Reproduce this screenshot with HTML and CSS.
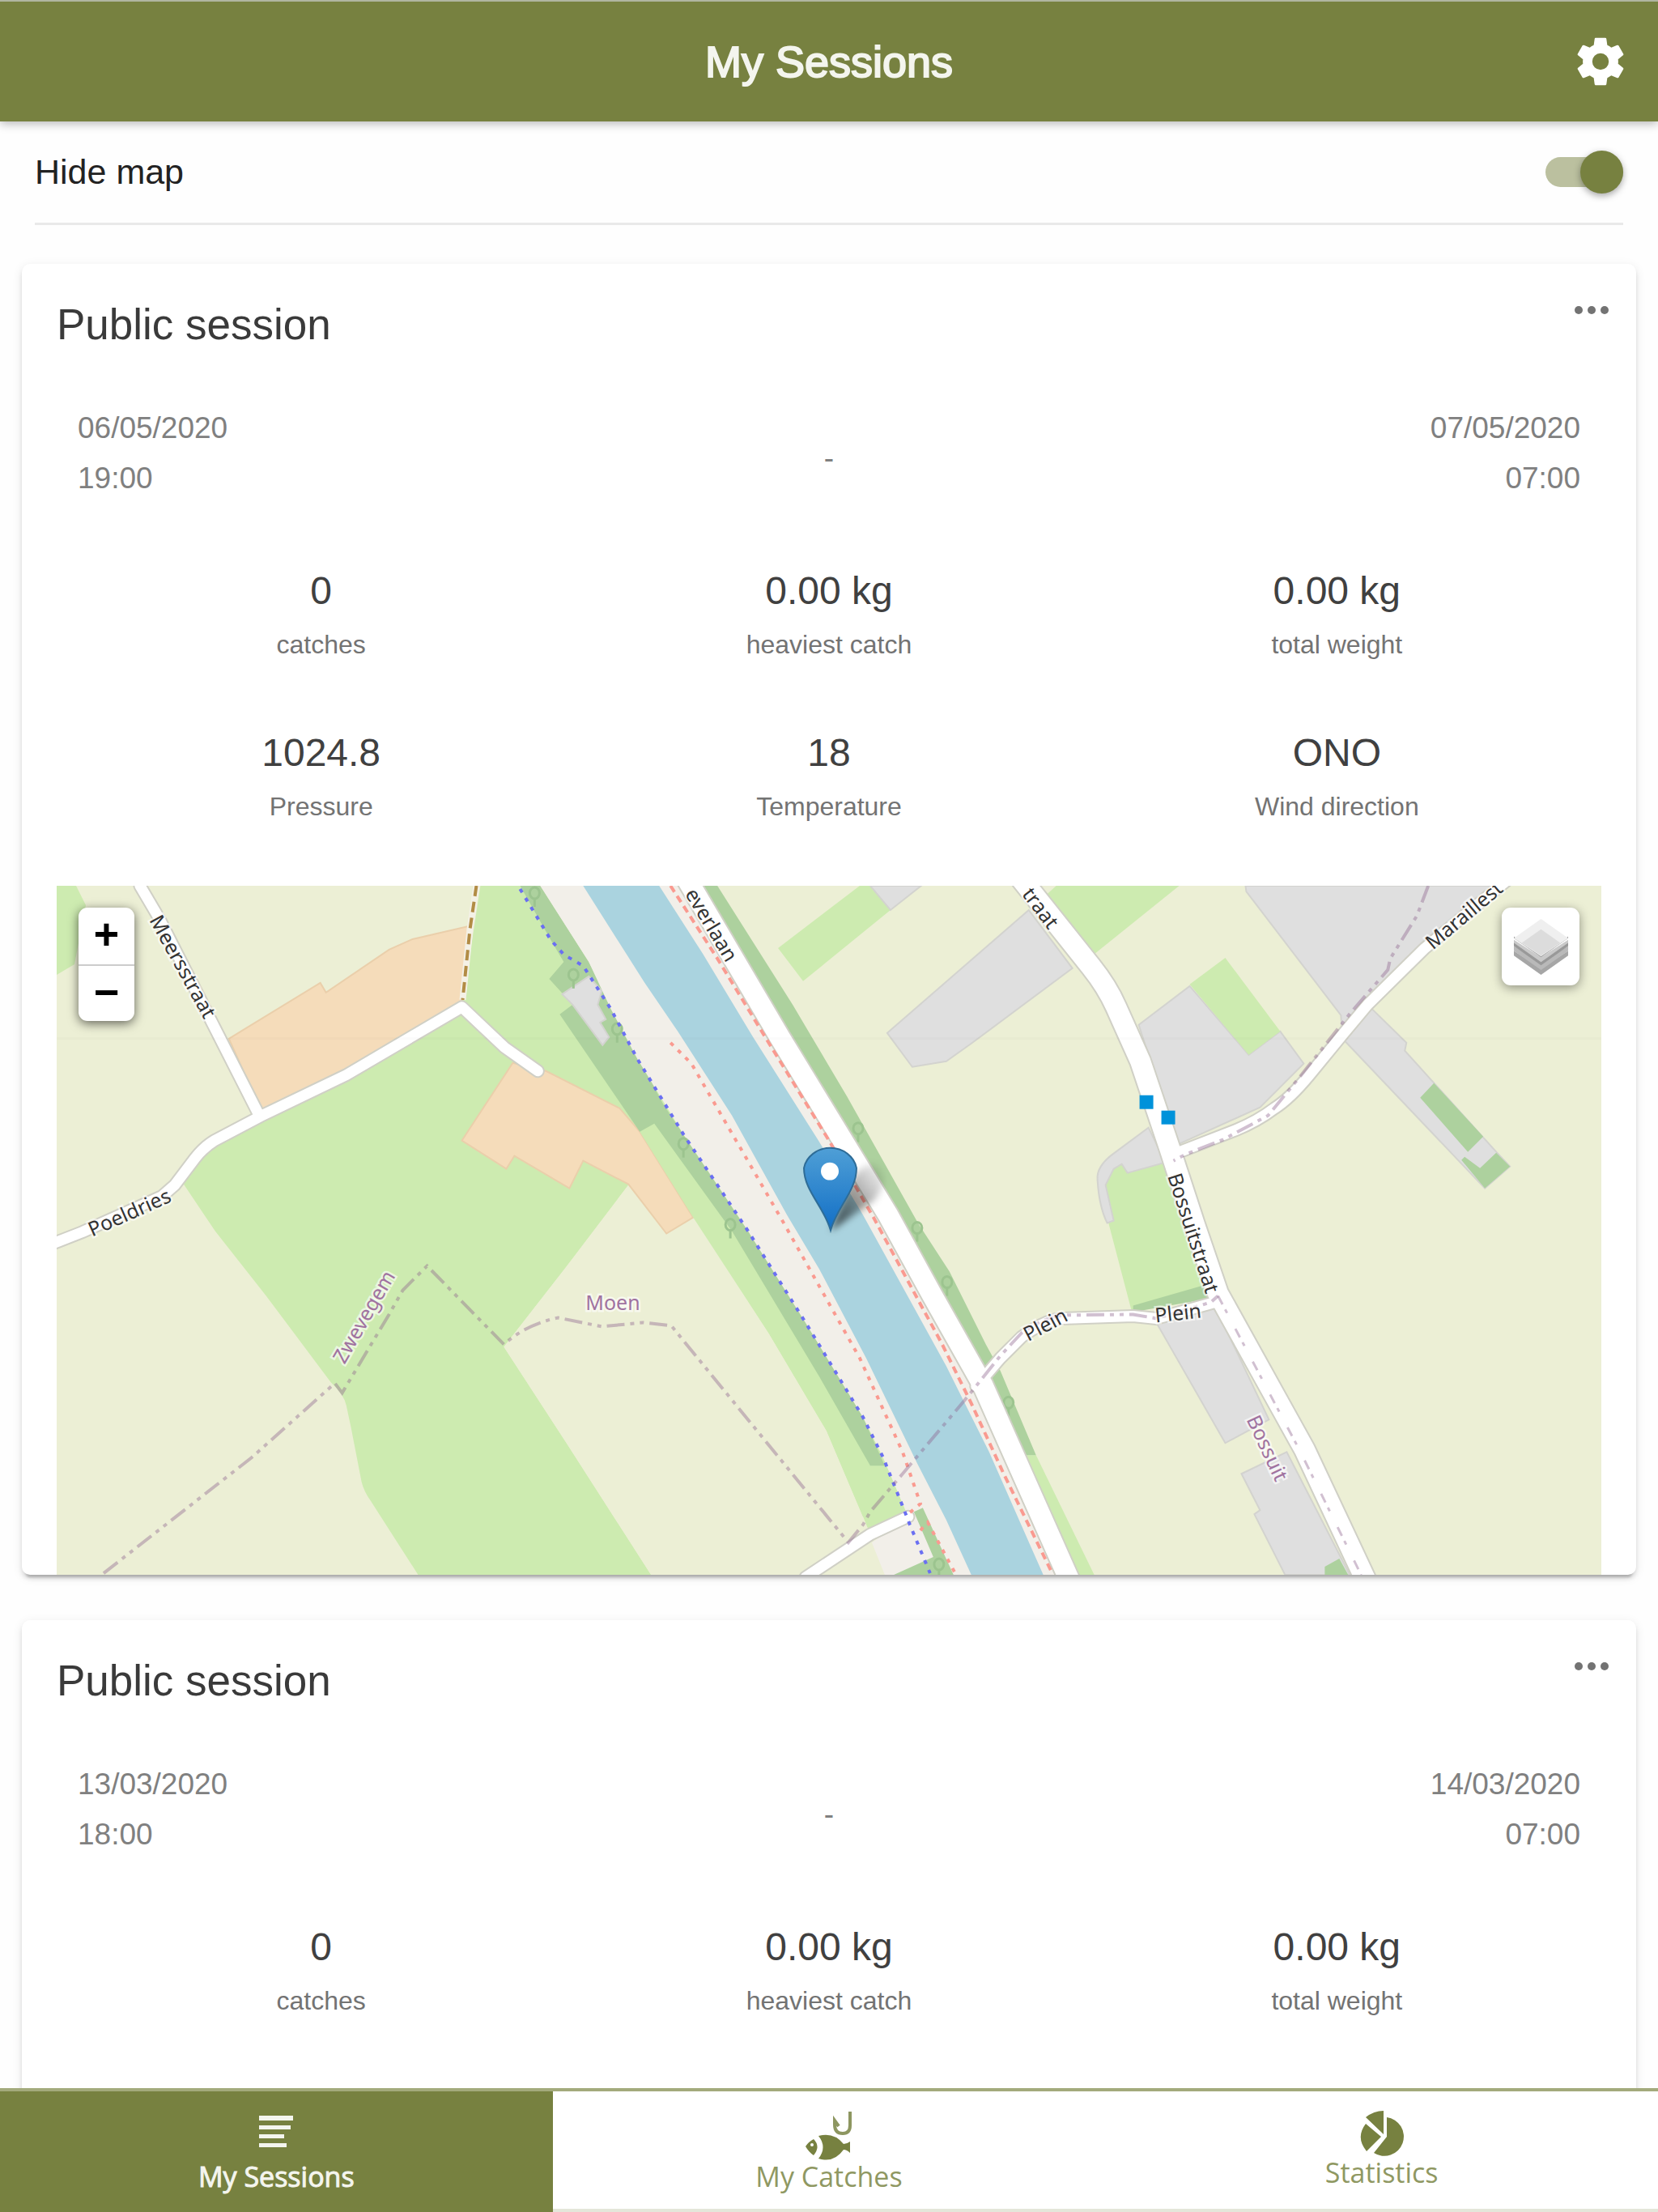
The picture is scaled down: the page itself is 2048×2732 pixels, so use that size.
FILE: index.html
```html
<!DOCTYPE html>
<html lang="en">
<head>
    <meta charset="UTF-8">
    <meta name="viewport" content="width=device-width, initial-scale=1">
    <title>My Sessions</title>
    <link rel="stylesheet" href="styles.css">
</head>
<body>
    <header class="toolbar">
        <h1>My Sessions</h1>
        <button class="settings" type="button" aria-label="Settings">
            <svg viewBox="0 0 24 24"><path d="M19.43 12.98c.04-.32.07-.64.07-.98s-.03-.66-.07-.98l2.11-1.65c.19-.15.24-.42.12-.64l-2-3.46c-.12-.22-.39-.3-.61-.22l-2.49 1c-.52-.4-1.08-.73-1.69-.98l-.38-2.65A.49.49 0 0 0 14 2h-4c-.25 0-.46.18-.49.42l-.38 2.65c-.61.25-1.17.59-1.69.98l-2.49-1c-.23-.09-.49 0-.61.22l-2 3.46c-.13.22-.07.49.12.64l2.11 1.65c-.04.32-.07.65-.07.98s.03.66.07.98l-2.11 1.65c-.19.15-.24.42-.12.64l2 3.46c.12.22.39.3.61.22l2.49-1c.52.4 1.08.73 1.69.98l.38 2.65c.03.24.24.42.49.42h4c.25 0 .46-.18.49-.42l.38-2.65c.61-.25 1.17-.59 1.69-.98l2.49 1c.23.09.49 0 .61-.22l2-3.46c.12-.22.07-.49-.12-.64zM12 15.5a3.5 3.5 0 1 1 0-7 3.5 3.5 0 0 1 0 7z"/></svg>
        </button>
    </header>

    <main class="content">
        <div class="option">
            <label for="hide-map">Hide map</label>
            <input id="hide-map" class="toggle" type="checkbox" checked>
        </div>

        <article class="card">
            <div class="card-head">
                <h2>Public session</h2>
                <button class="more" type="button" aria-label="More">
                    <svg viewBox="0 0 44 12"><circle cx="6" cy="6" r="5"/><circle cx="22" cy="6" r="5"/><circle cx="38" cy="6" r="5"/></svg>
                </button>
            </div>
            <div class="period">
                <div>06/05/2020<br>19:00</div>
                <div class="dash">-</div>
                <div class="end">07/05/2020<br>07:00</div>
            </div>
            <div class="stats">
                <div><div class="value">0</div><div class="name">catches</div></div>
                <div><div class="value">0.00 kg</div><div class="name">heaviest catch</div></div>
                <div><div class="value">0.00 kg</div><div class="name">total weight</div></div>
                <div><div class="value">1024.8</div><div class="name">Pressure</div></div>
                <div><div class="value">18</div><div class="name">Temperature</div></div>
                <div><div class="value">ONO</div><div class="name">Wind direction</div></div>
            </div>
            <div class="map">
                <svg class="tiles" viewBox="69 1093 1910 852">
                    <defs>
                        <linearGradient id="pin" x1="0" y1="0" x2="0" y2="1">
                            <stop offset="0" stop-color="#4f9fd6"/>
                            <stop offset="1" stop-color="#126fc6"/>
                        </linearGradient>
                        <linearGradient id="pin-shade" x1="0" y1="1" x2="1" y2="0">
                            <stop offset="0" stop-opacity=".7"/>
                            <stop offset="1" stop-opacity="0"/>
                        </linearGradient>
                        <filter id="soft" x="-50%" y="-50%" width="200%" height="200%"><feGaussianBlur stdDeviation="4"/></filter>
                        <g id="tree"><ellipse cx="0" cy="0" rx="6" ry="7"/><path d="M0 7V17"/></g>
                    </defs>
                    <rect class="farm" x="60" y="1080" width="1930" height="880"/>

                    <!-- meadows -->
                    <g class="meadow">
                        <path d="M69 1093H93L105 1117L91 1190L69 1203Z"/>
                        <path d="M226 1462L265 1520L328 1600L408 1707Q424 1722 427 1735L433 1763L446 1830Q449 1842 457 1853L516 1945H804L700 1783L622 1663L700 1563L776 1463L860 1505L950 1647L1021 1767L1066 1873L1075 1895L1122 1873L1091 1800L1066 1750L924 1520L754 1245L642 1093H593L570 1243L427 1327L264 1408Z"/>
                        <path d="M1062 1093H1078L1100 1123L992 1211L961 1170Z"/>
                        <path d="M1305 1093H1457L1350 1179L1294 1103Z"/>
                        <path d="M1366 1463L1376 1443L1386 1437L1393 1448L1440 1435L1496 1603L1398 1618L1367 1500Z"/>
                        <path d="M1250 1797H1280L1352 1945H1310Z"/>
                    </g>
                    <path class="farm" d="M776 1463L823 1523L856 1503L950 1647L1021 1767L1066 1873L1075 1895L999 1945H804L700 1783L622 1663L700 1563Z"/>

                    <!-- farmyards -->
                    <path class="yard" d="M282 1282L395 1213L402 1225L480 1172L509 1159L578 1143L570 1240L427 1327L323 1374Z"/>
                    <path class="yard" d="M633 1312L570 1408L625 1443L635 1427L703 1467L720 1433L776 1462L823 1523L856 1503L790 1397L765 1368L674 1322Z"/>
                    <path class="meadow" d="M790 1397L808 1387L904 1520L1012 1700L1075 1810L1066 1873L1021 1767L950 1647L856 1503Z"/>

                    <!-- woods on the left bank -->
                    <path class="wood" d="M642 1093H667L727 1187L745 1223L819 1363L924 1520L995 1633L1066 1750L1093 1810H1075L1012 1700L904 1520L808 1387L790 1397L691 1252L707 1240L678 1208L696 1187L680 1160Z"/>
                    <path class="built" d="M694 1227L727 1205L743 1223L738 1240L748 1258L741 1262L752 1280L744 1290L707 1240Z"/>

                    <!-- canal -->
                    <path class="bank" d="M667 1093H853L963 1280L1097 1500L1152 1600L1214 1710L1318 1945H1093L1077 1905L1122 1873L1091 1800L1066 1750L995 1633L924 1520L886 1463L845 1402L787 1307L754 1245L727 1187Z"/>
                    <path class="wood" d="M1104 1945L1153 1923L1129 1867L1140 1862L1178 1945Z"/>
                    <path class="water" d="M720 1093H814L868 1177L930 1280L1011 1408L1066 1500L1169 1687L1222 1793L1289 1945H1200L1169 1877L1133 1807L1070 1677L1012 1567L972 1500L904 1377L837 1273L796 1213Z"/>
                    <path class="wood" d="M853 1093H886L979 1240L1046 1353L1134 1510L1173 1570L1218 1660L1236 1693L1280 1797H1250L1097 1500Z"/>

                    <!-- built-up areas -->
                    <g class="built">
                        <path d="M1075 1093H1138L1100 1123Z"/>
                        <path d="M1096 1275L1127 1317L1169 1310L1200 1288L1325 1195L1271 1123Z"/>
                        <path d="M1407 1265L1470 1217L1543 1302L1582 1273L1611 1313L1557 1367L1455 1413Z"/>
                        <path d="M1539 1093H1858L1761 1170L1690 1240L1738 1287L1736 1297L1850 1423L1866 1440L1835 1467L1659 1282L1657 1253L1540 1100Z"/>
                        <path d="M1419 1392L1376 1424Q1354 1440 1356 1457Q1358 1490 1368 1510L1376 1507L1366 1463L1376 1443L1386 1437L1393 1448L1440 1435Z"/>
                        <path d="M1427 1630L1501 1612L1568 1753L1514 1782Z"/>
                        <path d="M1534 1820L1590 1793L1668 1945H1588L1550 1870L1557 1865Z"/>
                    </g>
                    <path class="meadow" d="M1470 1215L1514 1182L1582 1273L1543 1302Z"/>
                    <g class="wood">
                        <path d="M1772 1337L1833 1403L1814 1422L1755 1355Z"/>
                        <path d="M1810 1428L1829 1442L1849 1423L1866 1440L1835 1467L1806 1432Z"/>
                        <path d="M1400 1612L1487 1587L1496 1603L1400 1620Z"/>
                        <path d="M1637 1945V1935L1655 1925L1666 1945Z"/>
                    </g>
                    <g class="tree">
                        <use href="#tree" x="660" y="1102"/><use href="#tree" x="708" y="1203"/>
                        <use href="#tree" x="762" y="1270"/><use href="#tree" x="844" y="1412"/>
                        <use href="#tree" x="902" y="1512"/><use href="#tree" x="1060" y="1393"/>
                        <use href="#tree" x="1133" y="1516"/><use href="#tree" x="1170" y="1583"/>
                        <use href="#tree" x="1246" y="1732"/><use href="#tree" x="1160" y="1932"/>
                    </g>

                    <!-- roads: grey casing first, then the white fill -->
                    <g class="casing">
                        <path class="minor" d="M172 1093L195 1132L320 1378"/>
                        <path class="minor" d="M60 1537L101 1521L199 1477L215 1463L240 1430Q251 1416 264 1408L321 1378L427 1327L570 1243L623 1293L664 1322"/>
                        <path class="minor" d="M995 1948L1075 1895L1122 1873"/>
                        <path class="minor" d="M1206 1712L1236 1677L1262 1651Q1290 1630 1312 1628L1400 1625L1429 1628L1501 1608"/>
                        <path class="minor" d="M1870 1080L1761 1170L1690 1240L1659 1277L1618 1327Q1594 1356 1575 1368Q1554 1384 1527 1395L1450 1425"/>
                        <path class="major" d="M1258 1080L1348 1193Q1368 1218 1379 1243L1409 1310L1445 1417L1476 1512L1505 1597L1612 1790L1688 1952"/>
                        <path class="major" d="M846 1081L963 1280L1097 1500L1152 1600L1214 1710L1322 1953"/>
                    </g>
                    <g class="road">
                        <path class="minor" d="M172 1093L195 1132L320 1378"/>
                        <path class="minor" d="M60 1537L101 1521L199 1477L215 1463L240 1430Q251 1416 264 1408L321 1378L427 1327L570 1243L623 1293L664 1322"/>
                        <path class="minor" d="M995 1948L1075 1895L1122 1873"/>
                        <path class="minor" d="M1206 1712L1236 1677L1262 1651Q1290 1630 1312 1628L1400 1625L1429 1628L1501 1608"/>
                        <path class="minor" d="M1870 1080L1761 1170L1690 1240L1659 1277L1618 1327Q1594 1356 1575 1368Q1554 1384 1527 1395L1450 1425"/>
                        <path class="major" d="M1258 1080L1348 1193Q1368 1218 1379 1243L1409 1310L1445 1417L1476 1512L1505 1597L1612 1790L1688 1952"/>
                        <path class="major" d="M846 1081L963 1280L1097 1500L1152 1600L1214 1710L1322 1953"/>
                    </g>

                    <!-- tracks -->
                    <path class="track-bed" d="M588 1093L580 1147L571 1234"/>
                    <path class="track" d="M588 1093L580 1147L571 1234"/>
                    <path class="cycle" d="M642 1097L680 1160L696 1178L720 1192L754 1245L787 1307L845 1402L886 1463L924 1520L995 1633L1066 1750L1091 1800L1117 1865L1124 1883L1149 1943"/>
                    <path class="foot" d="M828 1093L886 1183L953 1293L1024 1408L1079 1503L1164 1660L1200 1733L1240 1820L1300 1943"/>
                    <path class="foot dots" d="M828 1287L854 1313L912 1413L968 1510L1062 1677L1115 1793L1137 1857L1124 1868M1137 1890L1146 1880L1180 1943"/>

                    <!-- municipal boundaries -->
                    <g class="boundary">
                        <path d="M127 1943L310 1800L413 1708L422 1720L480 1623L497 1593L527 1563L622 1660Q650 1635 689 1627L743 1638L794 1633L829 1637L1048 1905L1066 1883L1075 1867L1115 1820L1191 1730L1236 1674L1262 1646Q1290 1627 1312 1624L1400 1623L1429 1628L1496 1608L1505 1600"/>
                        <path d="M1765 1093L1751 1130L1718 1183L1715 1197L1669 1250L1608 1327L1567 1377L1511 1407L1465 1425L1450 1433"/>
                        <path class="thin" d="M1505 1600L1607 1793L1682 1945"/>
                    </g>
                    <rect class="stop" x="1408" y="1352" width="17" height="17"/>
                    <rect class="stop" x="1435" y="1371" width="17" height="17"/>
                    <path class="seam" d="M69 1282H1979"/>

                    <g class="street">
                        <text transform="translate(191 1131) rotate(61)" dy="9">Meersstraat</text>
                        <text transform="translate(109 1519) rotate(-24)" dy="9">Poeldries</text>
                        <text transform="translate(853 1098) rotate(59)" dy="9">everlaan</text>
                        <text transform="translate(1269 1098) rotate(53)" dy="9">traat</text>
                        <text transform="translate(1765 1166) rotate(-40)" dy="9">Maraillest</text>
                        <text transform="translate(1451 1449) rotate(72)" dy="9">Bossuitstraat</text>
                        <text transform="translate(1266 1649) rotate(-28)" dy="9">Plein</text>
                        <text transform="translate(1427 1624) rotate(-6)" dy="9">Plein</text>
                    </g>
                    <g class="place">
                        <text transform="translate(417 1681) rotate(-60)" dy="9">Zwevegem</text>
                        <text x="723" y="1618">Moen</text>
                        <text transform="translate(1548 1749) rotate(65)" dy="9">Bossuit</text>
                    </g>

                    <path fill="url(#pin-shade)" filter="url(#soft)" d="M1026 1520L1052 1455Q1072 1430 1088 1440Q1100 1456 1080 1482Z"/>
                    <path class="pin" d="M1026 1519C1018 1490 993 1470 993 1442A33 30 0 0 1 1058 1442C1058 1470 1034 1490 1026 1519Z"/>
                    <circle cx="1025" cy="1446" r="11" fill="#fff"/>
                </svg>
                <div class="zoom">
                    <button type="button" aria-label="Zoom in">+</button>
                    <button type="button" aria-label="Zoom out">−</button>
                </div>
                <button class="layers" type="button" aria-label="Layers">
                    <svg viewBox="0 0 70 70">
                        <path fill="#a6a6a6" d="M1 46L35 70L69 46V40L35 62L1 40Z"/>
                        <path fill="#b9b9b9" d="M1 40L35 64L69 40V34L35 56L1 34Z"/>
                        <path fill="#999" d="M1 34L35 58L69 34V29L35 50L1 29Z"/>
                        <path fill="#c9c9c9" d="M1 30L35 54L69 30V26L35 48L1 26Z"/>
                        <path fill="#8f8f8f" d="M1 24L35 48L69 24V22L35 44L1 22Z"/>
                        <path fill="#efefef" d="M35 0L69 24L35 47L1 24Z"/>
                        <path fill="#dcdcdc" d="M35 13L59 30L35 46L11 30Z"/>
                    </svg>
                </button>
            </div>
        </article>

        <article class="card">
            <div class="card-head">
                <h2>Public session</h2>
                <button class="more" type="button" aria-label="More">
                    <svg viewBox="0 0 44 12"><circle cx="6" cy="6" r="5"/><circle cx="22" cy="6" r="5"/><circle cx="38" cy="6" r="5"/></svg>
                </button>
            </div>
            <div class="period">
                <div>13/03/2020<br>18:00</div>
                <div class="dash">-</div>
                <div class="end">14/03/2020<br>07:00</div>
            </div>
            <div class="stats">
                <div><div class="value">0</div><div class="name">catches</div></div>
                <div><div class="value">0.00 kg</div><div class="name">heaviest catch</div></div>
                <div><div class="value">0.00 kg</div><div class="name">total weight</div></div>
            </div>
        </article>
    </main>

    <nav class="tabs">
        <a class="tab active" href="#sessions">
            <svg width="60" height="63" viewBox="0 0 60 63"><path d="M9 8H51V14H9ZM9 20H48V25H9ZM9 31H40V36H9ZM9 42H43V47H9Z"/></svg>
            My Sessions
        </a>
        <a class="tab" href="#catches">
            <svg width="60" height="63" viewBox="0 0 60 63">
                <path fill-rule="evenodd" d="M1 46Q5 40 11 37Q20 46 11 57Q5 53 1 46ZM9 42A2 2 0 1 0 9 46A2 2 0 1 0 9 42Z"/>
                <path d="M17 33Q36 28 48 43Q52 43 56 40V54Q52 50 48 50Q36 67 17 61Q28 47 17 33Z"/>
                <path class="hook" d="M56 3V20Q56 30 47 30Q37 30 37 19V14L42 21"/>
            </svg>
            My Catches
        </a>
        <a class="tab" href="#statistics">
            <svg width="60" height="58" viewBox="0 3 60 58"><path d="M36 13V37L20 57A24 24 0 1 0 36 13ZM10 21L29 37L11 55Q-3 38 10 21ZM10 13Q20 5 32 5V34Z"/></svg>
            Statistics
        </a>
    </nav>
</body>
</html>
```
FILE: styles.css
```css
* {
    box-sizing: border-box;
}
html {
    height: 100%;
}
body {
    height: 100%;
    margin: 0;
    display: flex;
    flex-direction: column;
    background-color: #fefefe;
    color: #222;
    font-family: "Liberation Sans", Arial, sans-serif;
}
h1, h2 {
    margin: 0;
    font-weight: normal;
}
button {
    padding: 0;
    border: none;
    background: none;
    font: inherit;
    cursor: pointer;
}
svg {
    display: block;
}

/* Toolbar */
.toolbar {
    position: relative;
    z-index: 1;
    flex: none;
    height: 150px;
    display: grid;
    grid-template-columns: 1fr auto 1fr;
    align-items: center;
    padding: 0 36px;
    border-top: 2px solid #b0b5a0;
    background-color: #778140;
    color: #fff;
    box-shadow: 0 3px 11px rgba(0, 0, 0, 0.28);
}
.toolbar h1 {
    grid-column: 2;
    font-size: 54px;
    color: #f4f5ee;
    -webkit-text-stroke: 2px #f4f5ee;
}
.settings {
    justify-self: end;
}
.settings svg {
    width: 70px;
    height: 70px;
    fill: #fff;
}

.content {
    flex: 1;
    min-height: 0;
    overflow-y: auto;
    scrollbar-width: none;
}
.option {
    display: flex;
    align-items: center;
    justify-content: space-between;
    height: 128px;
    margin: 0 43px;
    border-bottom: 3px solid #e9e9e9;
    font-size: 43px;
}
.toggle {
    appearance: none;
    position: relative;
    width: 96px;
    height: 37px;
    margin: 0;
    border-radius: 19px;
    background-color: #bbc09f;
}
.toggle::before {
    content: "";
    position: absolute;
    top: -8px;
    left: 0;
    width: 53px;
    height: 53px;
    border-radius: 50%;
    background-color: #778140;
    box-shadow: 0 3px 8px rgba(0, 0, 0, 0.35);
}
.toggle:checked::before {
    left: auto;
    right: 0;
}

/* Session cards */
.card {
    margin: 48px 27px 56px;
    padding: 43px 43px 0;
    border-radius: 10px;
    background-color: #fff;
    box-shadow: 0 8px 3px -5px rgba(0, 0, 0, 0.2), 0 5px 5px rgba(0, 0, 0, 0.1), 0 3px 13px rgba(0, 0, 0, 0.09);
}
.card + .card {
    margin-top: 56px;
    padding-bottom: 65px;
}
.card-head {
    display: flex;
    justify-content: space-between;
    height: 64px;
}
.card-head h2 {
    font-size: 53px;
    line-height: 64px;
    color: #3a3a3a;
}
.more {
    align-self: flex-start;
    height: 27px;
    margin-right: -10px;
}
.more svg {
    width: 44px;
    height: 12px;
    fill: #737373;
}
.period {
    display: grid;
    grid-template-columns: 1fr 1fr 1fr;
    align-items: center;
    justify-items: center;
    padding: 65px 26px 0;
    font-size: 37px;
    line-height: 62px;
    color: #808080;
}
.period div:first-child {
    justify-self: start;
}
.period .dash {
    padding-top: 12px;
}
.period .end {
    justify-self: end;
    text-align: right;
}
.stats {
    display: grid;
    grid-template-columns: 1fr 1fr 1fr;
    row-gap: 68px;
    padding: 75px 13px 65px;
    text-align: center;
    line-height: 66px;
}
.value {
    font-size: 48px;
    color: #404040;
}
.name {
    font-size: 32px;
    color: #737373;
}

/* Map */
.map {
    position: relative;
}
.tiles {
    width: 100%;
    height: auto;
    fill: none;
}
.farm { fill: #ecefd5; }
.meadow { fill: #cdebb0; }
.wood { fill: #add19e; }
.bank { fill: #f2efe9; }
.water { fill: #aad3df; }
.stop { fill: #0092da; }
.yard {
    fill: #f5dcba;
    stroke: #eacfab;
    stroke-width: 2px;
}
.built {
    fill: #dfdfdf;
    stroke: #d3d3cf;
    stroke-width: 2px;
}
.tree {
    stroke: #9cc48f;
    stroke-width: 3px;
}
.casing, .road {
    stroke-linecap: round;
    stroke-linejoin: round;
}
.casing { stroke: #d0d0c6; }
.road { stroke: #fff; }
.casing .minor { stroke-width: 17px; }
.casing .major { stroke-width: 29px; }
.road .minor { stroke-width: 13px; }
.road .major { stroke-width: 25px; }
.track-bed {
    stroke: #f4f1e6;
    stroke-width: 8px;
}
.track {
    stroke: #b28c45;
    stroke-width: 4px;
    stroke-dasharray: 13 7;
}
.cycle {
    stroke: #6a6ff2;
    stroke-width: 4px;
    stroke-dasharray: 5 8;
}
.foot {
    stroke: #fa9a90;
    stroke-width: 4px;
    stroke-dasharray: 9 6;
}
.foot.dots {
    stroke-dasharray: 5 8;
}
.boundary {
    stroke: #8d618b;
    stroke-opacity: 0.4;
    stroke-width: 4px;
    stroke-dasharray: 22 7 5 7 5 7;
}
.boundary .thin {
    stroke-width: 3px;
    stroke-dasharray: 12 7 5 22;
}
.seam {
    stroke: #000;
    stroke-opacity: 0.015;
    stroke-width: 3px;
}
.street, .place {
    font-family: "Noto Sans", sans-serif;
    font-size: 25px;
    paint-order: stroke;
    stroke: #fff;
    stroke-opacity: 0.6;
    stroke-width: 5px;
}
.street { fill: #333; }
.place { fill: #a072a0; }
.pin {
    fill: url(#pin);
    stroke: #2e6c97;
    stroke-width: 2px;
}
.zoom, .layers {
    position: absolute;
    top: 27px;
    border-radius: 11px;
    background-color: #fff;
    box-shadow: 0 3px 13px rgba(0, 0, 0, 0.6);
}
.zoom {
    left: 27px;
    width: 69px;
}
.zoom button {
    display: block;
    width: 100%;
    height: 70px;
    padding-top: 4px;
    font-family: "Liberation Mono", monospace;
    font-size: 54px;
    font-weight: bold;
    line-height: 66px;
    color: #000;
}
.zoom button + button {
    border-top: 2px solid #ccc;
}
.layers {
    right: 27px;
    width: 96px;
    height: 96px;
    box-shadow: 0 3px 13px rgba(0, 0, 0, 0.4);
}
.layers svg {
    width: 69px;
    height: 69px;
    margin: auto;
}

/* Bottom tabs */
.tabs {
    position: relative;
    flex: none;
    display: flex;
    height: 153px;
    border-top: 4px solid #a3aa7c;
    background-color: #fff;
}
.tab {
    flex: 1;
    display: flex;
    flex-direction: column;
    align-items: center;
    padding-top: 22px;
    border-bottom: 4px solid #e4e6da;
    font-family: "Open Sans", sans-serif;
    font-size: 34px;
    line-height: 40px;
    color: #8f9862;
    text-decoration: none;
}
.tab svg {
    fill: #778140;
}
.tab .hook {
    fill: none;
    stroke: #8d9660;
    stroke-width: 4px;
}
.tab.active {
    border-color: #778140;
    background-color: #778140;
    color: #f4f5ee;
    -webkit-text-stroke: 1px #f4f5ee;
}
.tab.active svg {
    fill: #f4f5ee;
}
```
